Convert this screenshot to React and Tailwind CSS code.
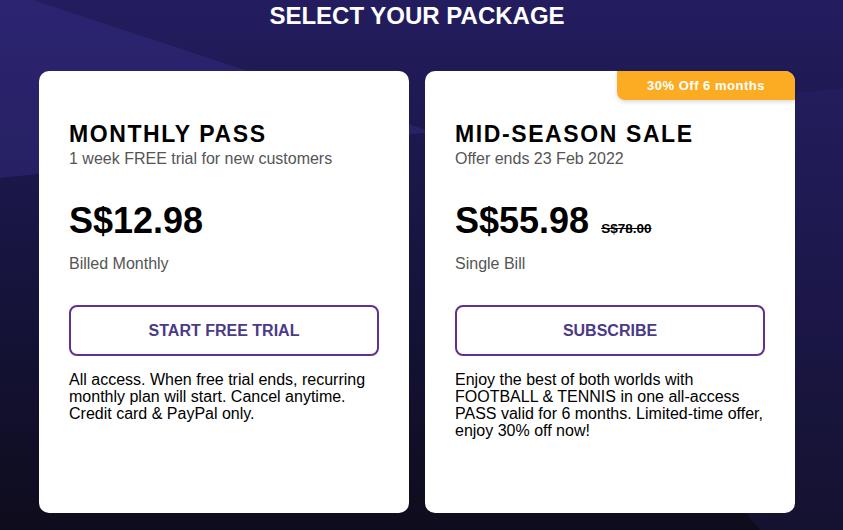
import React from "react";

const plans = [
  {
    name: "MONTHLY PASS",
    sub: "1 week FREE trial for new customers",
    price: "S$12.98",
    oldPrice: null,
    billing: "Billed Monthly",
    cta: "START FREE TRIAL",
    desc: "All access. When free trial ends, recurring monthly plan will start. Cancel anytime. Credit card & PayPal only.",
    badge: null,
  },
  {
    name: "MID-SEASON SALE",
    sub: "Offer ends 23 Feb 2022",
    price: "S$55.98",
    oldPrice: "S$78.00",
    billing: "Single Bill",
    cta: "SUBSCRIBE",
    desc: "Enjoy the best of both worlds with FOOTBALL & TENNIS in one all-access PASS valid for 6 months. Limited-time offer, enjoy 30% off now!",
    badge: "30% Off 6 months",
  },
];

const PlanCard = ({ plan }) => (
  <div className="relative bg-white rounded-[10px] w-[370px] h-[442px] px-[30px] pt-[49px]">
    {/* BADGE */}
    {plan.badge && (
      <div className="absolute top-0 right-0 w-[178px] h-[29px] bg-[#fcac22] rounded-tr-[10px] rounded-bl-[8px] shadow-[0_2px_4px_rgba(0,0,0,0.15)] flex items-center justify-center text-white text-[13px] font-bold tracking-[0.5px]">
        {plan.badge}
      </div>
    )}

    <h3 className="text-[23px] leading-[28px] font-bold tracking-[1.6px] text-black">
      {plan.name}
    </h3>
    <p className="mt-[2px] text-[16px] leading-[18px] text-[#555]">{plan.sub}</p>

    <div className="mt-[33px] flex items-baseline gap-[12px]">
      <span className="text-[36px] leading-[40px] font-bold text-black">
        {plan.price}
      </span>
      {plan.oldPrice && (
        <span className="text-[13.5px] font-bold text-black line-through">
          {plan.oldPrice}
        </span>
      )}
    </div>

    <p className="mt-[14px] text-[16px] leading-[18px] text-[#555]">
      {plan.billing}
    </p>

    <button className="mt-[32px] w-[310px] h-[51px] border-2 border-[#5f3192] rounded-[8px] text-[16px] font-bold text-[#4a3a87]">
      {plan.cta}
    </button>

    <p className="mt-[15px] text-[16px] leading-[17px] text-black">
      {plan.desc}
    </p>
  </div>
);

export default function App() {
  return (
    <div
      className="relative w-[843px] h-[530px] overflow-hidden bg-gradient-to-b from-[#231d5f] via-[#17143f] to-[#0e0c1c]"
      style={{ fontFamily: '"Liberation Sans", Arial, sans-serif' }}
    >
      {/* background shapes */}
      <svg className="absolute inset-0" width="843" height="530" viewBox="0 0 843 530">
        <polygon points="0,0 33,0 432,132 0,178" fill="#3a2f8c" opacity="0.4" />
        <polygon points="432,132 843,88 843,530 760,530" fill="#3a2f8c" opacity="0.18" />
      </svg>

      <div className="relative w-[834px] flex flex-col items-center">
        <h1 className="pt-[3px] text-[24px] leading-[26px] font-bold text-white">
          SELECT YOUR PACKAGE
        </h1>

        <div className="mt-[42px] flex gap-[16px]">
          {plans.map((p) => (
            <PlanCard key={p.name} plan={p} />
          ))}
        </div>
      </div>
    </div>
  );
}
